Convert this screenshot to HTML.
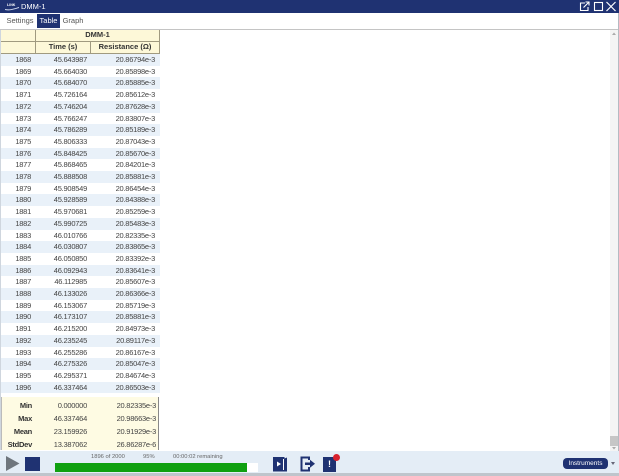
<!DOCTYPE html>
<html><head><meta charset="utf-8">
<style>
html,body{margin:0;padding:0;background:#fff}
body{width:619px;height:476px;position:relative;overflow:hidden;font-family:"Liberation Sans",sans-serif;color:#444;filter:blur(.3px)}
.abs{position:absolute}
#title{left:0;top:0;width:619px;height:13px;background:#1f3272}
#tabs{left:0;top:13px;width:619px;height:16px;background:#fff;border-bottom:1px solid #c4c4c4;box-sizing:content-box}
.tab{position:absolute;top:14px;height:14px;line-height:14px;font-size:7.5px;color:#555;text-align:center}
#grid{left:1px;top:54px;width:159px;font-size:7.5px;letter-spacing:-.25px}
.r{display:flex;height:11.714px;line-height:11.714px}
.r>div{box-sizing:border-box;flex:none}
.a{width:35px;padding-right:5px;text-align:right}
.b{width:55px;text-align:right;padding-right:4px}
.c{width:69px;text-align:right;padding-right:5px}
.r:nth-child(odd){background:#e9f1f9}
.h{background:#fdf8d8;font-weight:bold;color:#333;font-size:7.5px;text-align:center;box-sizing:border-box;position:absolute;border:1px solid #a09a80;line-height:10px}
#stats{left:1px;top:397px;width:158px;height:53px;background:#fefbe3;border-right:1px solid #888;border-left:1px solid #bbb;font-size:7.5px;letter-spacing:-.25px;box-sizing:border-box}
#stats div.s{position:absolute;left:0;width:157px;height:13px;line-height:13px}
#stats b{position:absolute;right:127px;color:#333}
#stats span{position:absolute}
#stats .v1{right:72px}
#stats .v2{right:3px}
#bar{left:0;top:451px;width:619px;height:22px;background:#e4edf6}
#bot{left:0;top:473px;width:619px;height:3px;background:#bfc5cc}
</style></head><body>
<div class="abs" id="title"></div>
<svg class="abs" style="left:5px;top:1px" width="15" height="11" viewBox="0 0 15 11"><text x="2" y="5" font-size="3.6" font-weight="bold" fill="#fff" font-family="Liberation Sans">LINK</text><path d="M0 8.500C5 9.500 9 8 14 6.500" stroke="#cfd8ee" stroke-width="1" fill="none"/></svg>
<div class="abs" style="left:21px;top:0;height:13px;line-height:13px;font-size:7.500px;color:#fff">DMM-1</div>
<svg class="abs" style="left:579px;top:1px" width="40" height="11" viewBox="0 0 40 11"><path d="M6 2H1.500V9.500H9V6" stroke="#fff" fill="none" stroke-width="1.100"/><path d="M4.500 6.500L9.500 1.500M6.500 1H10V4.500" stroke="#fff" fill="none" stroke-width="1.100"/><rect x="15.500" y="1.500" width="8" height="8" stroke="#fff" fill="none" stroke-width="1.100"/><path d="M27.500 1L36.500 10M36.500 1L27.500 10" stroke="#fff" fill="none" stroke-width="1.200"/></svg>
<div class="abs" id="tabs"></div>
<div class="tab" style="left:6px;width:28px">Settings</div>
<div class="tab" style="left:37px;width:23px;background:#1f3272;color:#fff">Table</div>
<div class="tab" style="left:62px;width:22px">Graph</div>

<div class="abs" style="left:0;top:30px;width:1px;height:420px;background:#cfd6de"></div>
<div class="h" style="left:1px;top:30px;width:35px;height:12px;border-width:0 1px 1px 0"></div>
<div class="h" style="left:35px;top:30px;width:125px;height:12px;border-width:0 1px 1px 1px">DMM-1</div>
<div class="h" style="left:1px;top:42px;width:35px;height:12px;border-width:0 1px 1px 0"></div>
<div class="h" style="left:35px;top:42px;width:56px;height:12px;border-width:0 1px 1px 1px">Time (s)</div>
<div class="h" style="left:90px;top:42px;width:70px;height:12px;border-width:0 1px 1px 1px">Resistance (Ω)</div>

<div class="abs" id="grid">
<div class="r"><div class="a">1868</div><div class="b">45.643987</div><div class="c">20.86794e-3</div></div>
<div class="r"><div class="a">1869</div><div class="b">45.664030</div><div class="c">20.85898e-3</div></div>
<div class="r"><div class="a">1870</div><div class="b">45.684070</div><div class="c">20.85885e-3</div></div>
<div class="r"><div class="a">1871</div><div class="b">45.726164</div><div class="c">20.85612e-3</div></div>
<div class="r"><div class="a">1872</div><div class="b">45.746204</div><div class="c">20.87628e-3</div></div>
<div class="r"><div class="a">1873</div><div class="b">45.766247</div><div class="c">20.83807e-3</div></div>
<div class="r"><div class="a">1874</div><div class="b">45.786289</div><div class="c">20.85189e-3</div></div>
<div class="r"><div class="a">1875</div><div class="b">45.806333</div><div class="c">20.87043e-3</div></div>
<div class="r"><div class="a">1876</div><div class="b">45.848425</div><div class="c">20.85670e-3</div></div>
<div class="r"><div class="a">1877</div><div class="b">45.868465</div><div class="c">20.84201e-3</div></div>
<div class="r"><div class="a">1878</div><div class="b">45.888508</div><div class="c">20.85881e-3</div></div>
<div class="r"><div class="a">1879</div><div class="b">45.908549</div><div class="c">20.86454e-3</div></div>
<div class="r"><div class="a">1880</div><div class="b">45.928589</div><div class="c">20.84388e-3</div></div>
<div class="r"><div class="a">1881</div><div class="b">45.970681</div><div class="c">20.85259e-3</div></div>
<div class="r"><div class="a">1882</div><div class="b">45.990725</div><div class="c">20.85483e-3</div></div>
<div class="r"><div class="a">1883</div><div class="b">46.010766</div><div class="c">20.82335e-3</div></div>
<div class="r"><div class="a">1884</div><div class="b">46.030807</div><div class="c">20.83865e-3</div></div>
<div class="r"><div class="a">1885</div><div class="b">46.050850</div><div class="c">20.83392e-3</div></div>
<div class="r"><div class="a">1886</div><div class="b">46.092943</div><div class="c">20.83641e-3</div></div>
<div class="r"><div class="a">1887</div><div class="b">46.112985</div><div class="c">20.85607e-3</div></div>
<div class="r"><div class="a">1888</div><div class="b">46.133026</div><div class="c">20.86366e-3</div></div>
<div class="r"><div class="a">1889</div><div class="b">46.153067</div><div class="c">20.85719e-3</div></div>
<div class="r"><div class="a">1890</div><div class="b">46.173107</div><div class="c">20.85881e-3</div></div>
<div class="r"><div class="a">1891</div><div class="b">46.215200</div><div class="c">20.84973e-3</div></div>
<div class="r"><div class="a">1892</div><div class="b">46.235245</div><div class="c">20.89117e-3</div></div>
<div class="r"><div class="a">1893</div><div class="b">46.255286</div><div class="c">20.86167e-3</div></div>
<div class="r"><div class="a">1894</div><div class="b">46.275326</div><div class="c">20.85047e-3</div></div>
<div class="r"><div class="a">1895</div><div class="b">46.295371</div><div class="c">20.84674e-3</div></div>
<div class="r"><div class="a">1896</div><div class="b">46.337464</div><div class="c">20.86503e-3</div></div>
</div>

<div class="abs" id="stats">
<div class="s" style="top:2px"><b>Min</b><span class="v1">0.000000</span><span class="v2">20.82335e-3</span></div>
<div class="s" style="top:15px"><b>Max</b><span class="v1">46.337464</span><span class="v2">20.98663e-3</span></div>
<div class="s" style="top:28px"><b>Mean</b><span class="v1">23.159926</span><span class="v2">20.91929e-3</span></div>
<div class="s" style="top:41px"><b>StdDev</b><span class="v1">13.387062</span><span class="v2">26.86287e-6</span></div>
</div>

<div class="abs" style="left:610px;top:30px;width:8px;height:421px;background:#f4f4f4"></div>
<div class="abs" style="left:610px;top:436px;width:8px;height:10px;background:#c6c6c6"></div>
<div class="abs" style="left:618px;top:13px;width:1px;height:438px;background:#b4bac2"></div>
<svg class="abs" style="left:610px;top:31px" width="8" height="5"><path d="M2 4L4 1.500L6 4Z" fill="#aaa"/></svg>
<svg class="abs" style="left:610px;top:446px" width="8" height="5"><path d="M2 1L4 3.500L6 1Z" fill="#aaa"/></svg>

<div class="abs" id="bar"></div>
<div class="abs" id="bot"></div>
<svg class="abs" style="left:6px;top:456px" width="14" height="15"><path d="M0 0L13.500 7.500L0 15Z" fill="#6f767d"/></svg>
<div class="abs" style="left:25px;top:457px;width:15px;height:14px;background:#1f3272"></div>
<div class="abs" style="left:55px;top:453px;font-size:5.800px;color:#666;width:203px;height:9px;line-height:9px">
<span class="abs" style="left:36px;white-space:nowrap">1896 of 2000</span><span class="abs" style="left:88px">95%</span><span class="abs" style="left:118px;white-space:nowrap">00:00:02 remaining</span></div>
<div class="abs" style="left:55px;top:463px;width:203px;height:9px;background:#fff"></div>
<div class="abs" style="left:55px;top:463px;width:192px;height:9px;background:#0fa010"></div>

<svg class="abs" style="left:272px;top:456px" width="16" height="16"><path d="M1 1H12.500L12.500 2.500L15 1.500V15.500H1Z" fill="#1f3272"/><path d="M5 5.500L9 8L5 10.500Z" fill="#fff"/><path d="M11.500 3V14" stroke="#fff" stroke-width="1"/></svg>
<svg class="abs" style="left:300px;top:456px" width="16" height="16" fill="none"><path d="M9 4V1.500H1.500V14.500H9V11" stroke="#1f3272" stroke-width="2"/><path d="M5 6.500H10V3.800L15 7.800L10 11.800V9H5Z" fill="#1f3272"/></svg>
<div class="abs" style="left:323px;top:457px;width:13px;height:15px;background:#1f3272;color:#fff;font:bold 9px/15px 'Liberation Sans',sans-serif;text-align:center">!</div>
<div class="abs" style="left:333px;top:454px;width:7px;height:7px;border-radius:50%;background:#d8222e"></div>
<div class="abs" style="left:563px;top:458px;width:45px;height:11px;border-radius:4px;background:#1f3272;color:#fff;font-size:6.500px;line-height:11px;text-align:center">Instruments</div>
<svg class="abs" style="left:610px;top:461px" width="6" height="5"><path d="M1 1H5L3 4Z" fill="#667"/></svg>
</body></html>
